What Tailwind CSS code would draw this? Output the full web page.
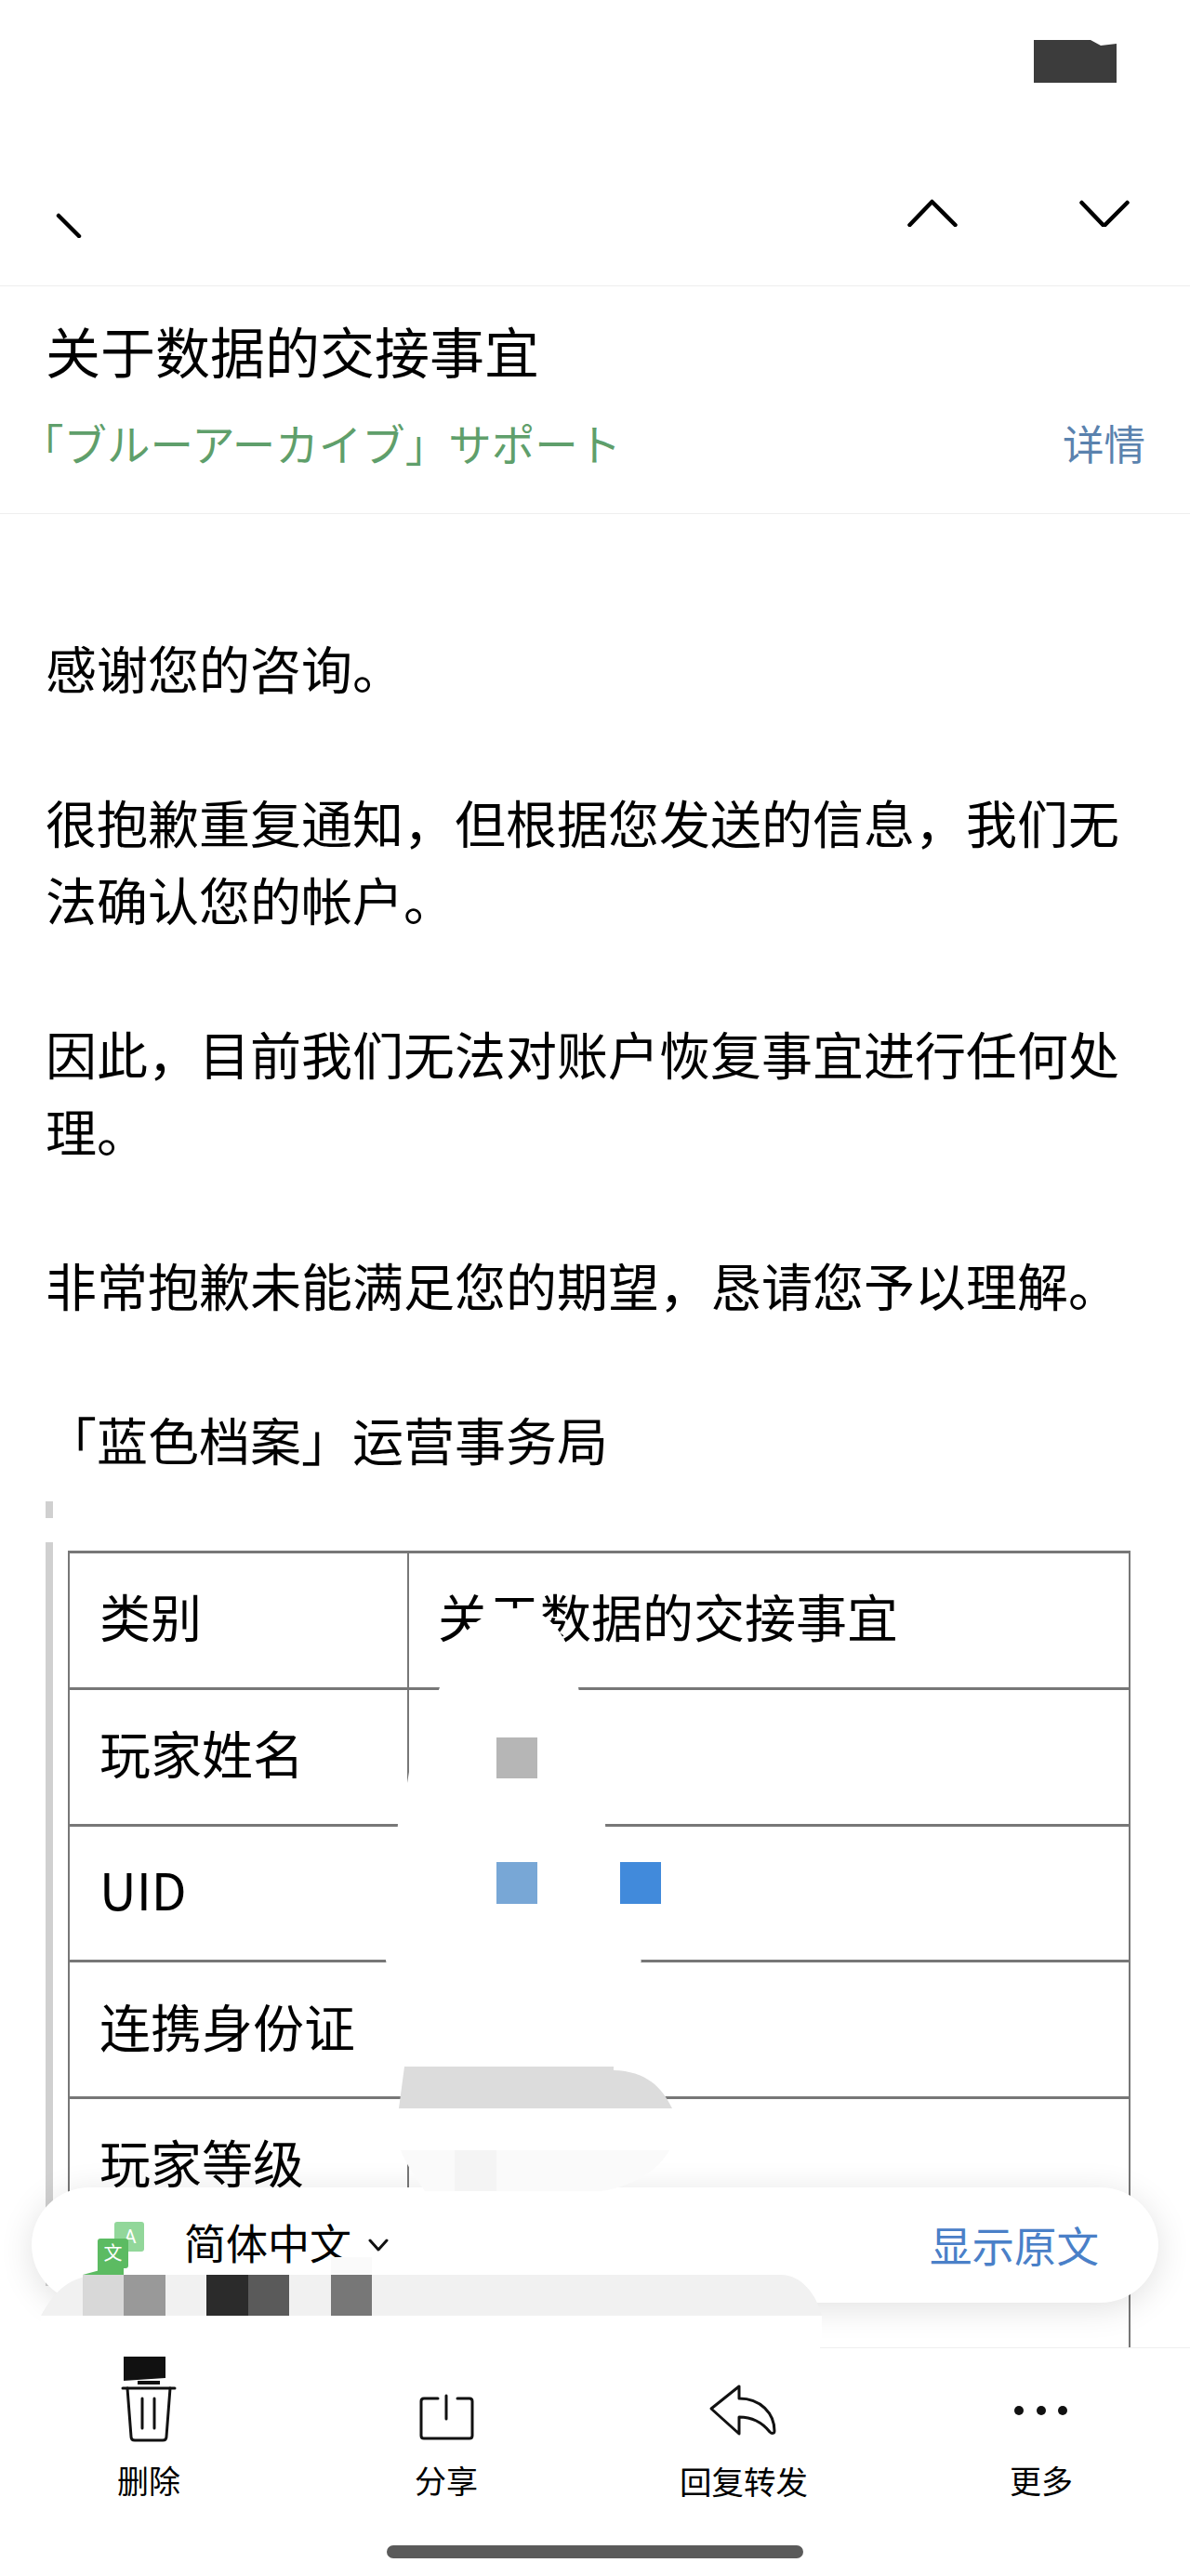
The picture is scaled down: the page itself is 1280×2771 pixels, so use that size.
<!DOCTYPE html>
<html lang="zh-CN">
<head>
    <meta charset="UTF-8">
    <meta name="viewport" content="width=device-width, initial-scale=1.0">
    <title>关于数据的交接事宜</title>
    <script src="https://cdn.jsdelivr.net/npm/@tailwindcss/browser@4"></script>
</head>
<body class="bg-white">
    <div class="relative w-[1280px] h-[2771px] overflow-hidden bg-white text-black font-['Noto_Sans_CJK_SC','Noto_Sans',sans-serif]">

        <!-- top nav -->
        <header class="h-[308px] border-b border-[#eeeeee] flex flex-col">
            <div class="h-[214px] pt-[43px] pr-[79px] flex justify-end">
                <svg class="w-[89px] h-[46px]" viewBox="0 0 89 46"><path d="M0 0H61L72 6L89 4V46H0Z" fill="#3c3c3c"/></svg>
            </div>
            <div class="flex justify-between pl-[60px] pr-[65px]">
                <svg class="w-[30px] h-[42px]" viewBox="0 0 30 42" fill="none" stroke="#000" stroke-width="4.5" stroke-linecap="round"><path d="M3 18L25 40"/></svg>
                <div class="flex gap-[131px]">
                    <svg class="w-[54px] h-[30px]" viewBox="0 0 54 30" fill="none" stroke="#000" stroke-width="4.5" stroke-linecap="round" stroke-linejoin="round"><path d="M2.5 28L26.5 3L51.5 28"/></svg>
                    <svg class="w-[54px] h-[30px]" viewBox="0 0 54 30" fill="none" stroke="#000" stroke-width="4.5" stroke-linecap="round" stroke-linejoin="round"><path d="M2.5 4L26.5 29L51.5 4"/></svg>
                </div>
            </div>
        </header>

        <!-- subject -->
        <section class="h-[245px] border-b border-[#eeeeee] pl-[49px] pr-[48px] pt-[33px]">
            <h1 class="text-[59px] leading-[72px] font-normal">关于数据的交接事宜</h1>
            <div class="mt-[33px] flex justify-between items-center leading-[60px]">
                <span class="text-[46.5px] text-[#5f9f6b] -ml-[27px] font-['Noto_Sans_CJK_JP','Noto_Sans',sans-serif]">「ブルーアーカイブ」サポート</span>
                <span class="text-[44.5px] text-[#5a82ae]">详情</span>
            </div>
        </section>

        <!-- body -->
        <main class="pt-[123px] pl-[49px] text-[55px] leading-[83px] w-[1240px]">
            <p>感谢您的咨询。</p>
            <p class="mt-[83px]">很抱歉重复通知，但根据您发送的信息，我们无法确认您的帐户。</p>
            <p class="mt-[83px]">因此，目前我们无法对账户恢复事宜进行任何处理。</p>
            <p class="mt-[83px]">非常抱歉未能满足您的期望，恳请您予以理解。</p>
            <p class="mt-[83px]">「蓝色档案」运营事务局</p>
        </main>

        <!-- quoted block with table -->
        <div class="mt-[26px] ml-[49px] w-[8px] h-[18px] bg-[#d0d0d0]"></div>
        <div class="mt-[26px] ml-[49px] flex">
            <div class="w-[8px] h-[800px] bg-[#d0d0d0]"></div>
            <table class="ml-[16px] mt-[9px] w-[1143px] h-fit border-collapse table-fixed text-[55px] leading-[80px] self-start">
                <colgroup><col class="w-[365px]"><col></colgroup>
                <tbody>
                    <tr class="h-[146.75px]">
                        <td class="border-x-2 border-y-[3px] border-[#777777] pl-[32px] pb-[11px]">类别</td>
                        <td class="border-x-2 border-y-[3px] border-[#777777] pl-[31px] pb-[11px]">关于数据的交接事宜</td>
                    </tr>
                    <tr class="h-[146.75px]">
                        <td class="border-x-2 border-y-[3px] border-[#777777] pl-[32px] pb-[11px]">玩家姓名</td>
                        <td class="border-x-2 border-y-[3px] border-[#777777]"></td>
                    </tr>
                    <tr class="h-[146.75px]">
                        <td class="border-x-2 border-y-[3px] border-[#777777] pl-[32px] pb-[11px]">UID</td>
                        <td class="border-x-2 border-y-[3px] border-[#777777]"></td>
                    </tr>
                    <tr class="h-[146.75px]">
                        <td class="border-x-2 border-y-[3px] border-[#777777] pl-[32px] pb-[11px]">连携身份证</td>
                        <td class="border-x-2 border-y-[3px] border-[#777777]"></td>
                    </tr>
                    <tr class="h-[146.75px]">
                        <td class="border-x-2 border-y-[3px] border-[#777777] pl-[32px] pb-[11px]">玩家等级</td>
                        <td class="border-x-2 border-y-[3px] border-[#777777]"></td>
                    </tr>
                    <tr class="h-[146.75px]">
                        <td class="border-x-2 border-y-[3px] border-[#777777]"></td>
                        <td class="border-x-2 border-y-[3px] border-[#777777]"></td>
                    </tr>
                </tbody>
            </table>
        </div>

        <!-- redaction smears over the table -->
        <svg class="absolute left-0 top-0 w-[1280px] h-[2771px] pointer-events-none" viewBox="0 0 1280 2771">
            <path d="M473 1815C482 1770 510 1730 557 1730C590 1730 615 1760 622 1815L651 1962C655 2040 668 2090 690 2109C680 2130 670 2180 660 2224H438V2200L415 2109L428 1962L438 1918L441 1900Z" fill="#fff"/>
            <path d="M435 2223H660V2227C695 2228 712 2245 723 2268H429Z" fill="#dcdcdc"/>
            <path d="M429 2268H723L720 2313H431Z" fill="#fff"/>
            <rect x="534" y="1869" width="44" height="44" fill="#b6b6b6"/>
            <rect x="534" y="2003" width="44" height="45" fill="#78a7d6"/>
            <rect x="667" y="2003" width="44" height="45" fill="#418adb"/>
        </svg>

        <!-- translation pill -->
        <div class="absolute left-[34px] top-[2353px] w-[1212px] h-[124px] rounded-full bg-white shadow-[0_6px_36px_rgba(0,0,0,0.12)] flex items-center justify-between pl-[164px] pr-[64px]">
            <div class="flex items-center text-[45px] leading-[60px] -mt-[6px]">
                <span>简体中文</span>
                <svg class="ml-[18px] mt-[6px] w-[22px] h-[14px]" viewBox="0 0 22 14" fill="none" stroke="#111" stroke-width="3" stroke-linecap="round" stroke-linejoin="round"><path d="M2 2L11 12L20 2"/></svg>
            </div>
            <span class="text-[45.5px] leading-[60px] -mt-[2px] text-[#4a80c8]">显示原文</span>
        </div>

        <!-- translate icon -->
        <svg class="absolute left-[85px] top-[2388px] w-[74px] h-[62px]" viewBox="85 2388 74 62">
            <rect x="123" y="2390" width="32" height="32" rx="3" fill="#92d79a"/>
            <text x="140" y="2413" text-anchor="middle" font-size="20" fill="#fff" font-family="Roboto, sans-serif">A</text>
            <rect x="105" y="2408" width="33" height="32" rx="3" fill="#5cbb62"/>
            <path d="M89 2447L133 2435V2447Z" fill="#5cbb62"/>
            <rect x="105" y="2435" width="28" height="12" fill="#5cbb62"/>
            <text x="121.5" y="2431" text-anchor="middle" font-size="20" fill="#fff" font-family="'Noto Sans CJK SC', sans-serif">文</text>
        </svg>

        <!-- mosaic strip and the pale smear over the pill's top edge -->
        <svg class="absolute left-0 top-0 w-[1280px] h-[2771px] pointer-events-none" viewBox="0 0 1280 2771">
            <path d="M431 2313H720C708 2335 680 2352 647 2357H457C445 2340 436 2326 431 2313Z" fill="#fafafa"/>
            <rect x="489" y="2313" width="45" height="44" fill="#f4f4f4"/>
            <path d="M44 2491C58 2465 75 2447 110 2447H840C862 2447 878 2468 884 2491Z" fill="#f1f1f1"/>
            <rect x="44" y="2491" width="840" height="40" fill="#fff"/>
            <rect x="89" y="2447" width="44" height="44" fill="#d8d8d8"/>
            <rect x="133" y="2447" width="45" height="44" fill="#999999"/>
            <rect x="222" y="2447" width="45" height="44" fill="#2b2b2b"/>
            <rect x="267" y="2447" width="44" height="44" fill="#5a5a5a"/>
            <rect x="356" y="2447" width="44" height="44" fill="#777777"/>
            <rect x="356" y="2428" width="44" height="19" fill="#fafafa"/>
        </svg>

        <!-- bottom toolbar -->
        <nav class="absolute left-0 bottom-0 w-full h-[246px] bg-white">
            <div class="h-px ml-[882px] bg-[#eeeeee]"></div>
            <div class="grid grid-cols-4 h-[170px]">
                <div class="flex flex-col items-center">
                    <svg class="w-[60px] h-[94px] mt-[8px]" viewBox="130 2534 60 94" fill="none" stroke="#111" stroke-width="3" stroke-linecap="round" stroke-linejoin="round">
                        <path d="M133 2535H178V2558L133 2561Z" fill="#111" stroke="none"/>
                        <path d="M148 2563H172" stroke-width="4" stroke-linecap="butt"/>
                        <path d="M132 2569H188"/>
                        <path d="M137 2569L141 2621Q141 2625 145 2625H175Q179 2625 179 2621L183 2569"/>
                        <path d="M153 2580V2612M166 2580V2612"/>
                    </svg>
                    <span class="mt-[18px] text-[34px] leading-[44px]">删除</span>
                </div>
                <div class="flex flex-col items-center">
                    <svg class="w-[60px] h-[94px] mt-[8px]" viewBox="450 2534 60 94" fill="none" stroke="#111" stroke-width="3" stroke-linecap="round" stroke-linejoin="round">
                        <path d="M471 2580H456Q453 2580 453 2583V2620Q453 2623 456 2623H505Q508 2623 508 2620V2583Q508 2580 505 2580H492"/>
                        <path d="M480 2577V2602"/>
                    </svg>
                    <span class="mt-[18px] text-[34px] leading-[44px]">分享</span>
                </div>
                <div class="flex flex-col items-center">
                    <svg class="w-[76px] h-[94px] mt-[8px]" viewBox="762 2534 76 94" fill="none" stroke="#111" stroke-width="3" stroke-linecap="round" stroke-linejoin="round">
                        <path d="M765 2591L795 2567V2580C818 2580 833 2596 833 2615C833 2618 830 2618 828 2616C820 2606 808 2600 795 2600V2618Z"/>
                    </svg>
                    <span class="mt-[18px] text-[34.5px] leading-[44px]">回复转发</span>
                </div>
                <div class="flex flex-col items-center">
                    <svg class="w-[60px] h-[94px] mt-[8px]" viewBox="1090 2534 60 94" fill="#111">
                        <circle cx="1096" cy="2593" r="5"/>
                        <circle cx="1120" cy="2593" r="5"/>
                        <circle cx="1143" cy="2593" r="5"/>
                    </svg>
                    <span class="mt-[18px] text-[34px] leading-[44px]">更多</span>
                </div>
            </div>
            <div class="mt-[42px] mx-auto w-[448px] h-[14px] rounded-full bg-[#5a5a5a]"></div>
        </nav>
    </div>
</body>
</html>
